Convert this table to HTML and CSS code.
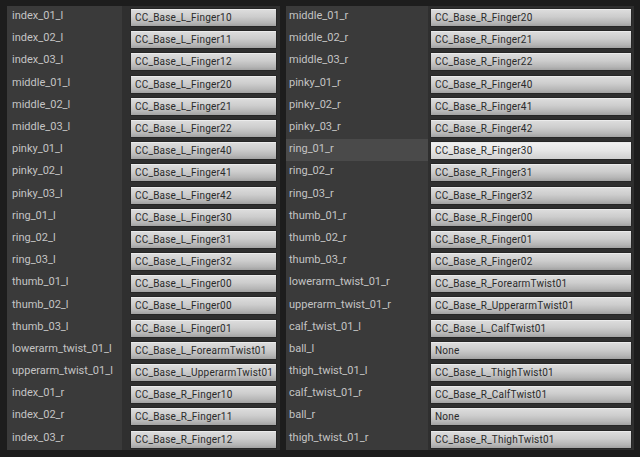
FILE: index.html
```html
<!DOCTYPE html>
<html>
<head>
<meta charset="utf-8">
<link rel="stylesheet" href="styles.css">
</head>
<body>
<div class="page">
  <div class="panel panel-left">
    <div class="lbl">index_01_l</div><div class="val"><div class="btn">CC_Base_L_Finger10</div></div>
    <div class="lbl">index_02_l</div><div class="val"><div class="btn">CC_Base_L_Finger11</div></div>
    <div class="lbl">index_03_l</div><div class="val"><div class="btn">CC_Base_L_Finger12</div></div>
    <div class="lbl">middle_01_l</div><div class="val"><div class="btn">CC_Base_L_Finger20</div></div>
    <div class="lbl">middle_02_l</div><div class="val"><div class="btn">CC_Base_L_Finger21</div></div>
    <div class="lbl">middle_03_l</div><div class="val"><div class="btn">CC_Base_L_Finger22</div></div>
    <div class="lbl">pinky_01_l</div><div class="val"><div class="btn">CC_Base_L_Finger40</div></div>
    <div class="lbl">pinky_02_l</div><div class="val"><div class="btn">CC_Base_L_Finger41</div></div>
    <div class="lbl">pinky_03_l</div><div class="val"><div class="btn">CC_Base_L_Finger42</div></div>
    <div class="lbl">ring_01_l</div><div class="val"><div class="btn">CC_Base_L_Finger30</div></div>
    <div class="lbl">ring_02_l</div><div class="val"><div class="btn">CC_Base_L_Finger31</div></div>
    <div class="lbl">ring_03_l</div><div class="val"><div class="btn">CC_Base_L_Finger32</div></div>
    <div class="lbl">thumb_01_l</div><div class="val"><div class="btn">CC_Base_L_Finger00</div></div>
    <div class="lbl">thumb_02_l</div><div class="val"><div class="btn">CC_Base_L_Finger00</div></div>
    <div class="lbl">thumb_03_l</div><div class="val"><div class="btn">CC_Base_L_Finger01</div></div>
    <div class="lbl">lowerarm_twist_01_l</div><div class="val"><div class="btn">CC_Base_L_ForearmTwist01</div></div>
    <div class="lbl">upperarm_twist_01_l</div><div class="val"><div class="btn">CC_Base_L_UpperarmTwist01</div></div>
    <div class="lbl">index_01_r</div><div class="val"><div class="btn">CC_Base_R_Finger10</div></div>
    <div class="lbl">index_02_r</div><div class="val"><div class="btn">CC_Base_R_Finger11</div></div>
    <div class="lbl">index_03_r</div><div class="val"><div class="btn">CC_Base_R_Finger12</div></div>
  </div>
  <div class="panel panel-right">
    <div class="lbl">middle_01_r</div><div class="val"><div class="btn">CC_Base_R_Finger20</div></div>
    <div class="lbl">middle_02_r</div><div class="val"><div class="btn">CC_Base_R_Finger21</div></div>
    <div class="lbl">middle_03_r</div><div class="val"><div class="btn">CC_Base_R_Finger22</div></div>
    <div class="lbl">pinky_01_r</div><div class="val"><div class="btn">CC_Base_R_Finger40</div></div>
    <div class="lbl">pinky_02_r</div><div class="val"><div class="btn">CC_Base_R_Finger41</div></div>
    <div class="lbl">pinky_03_r</div><div class="val"><div class="btn">CC_Base_R_Finger42</div></div>
    <div class="lbl hot">ring_01_r</div><div class="val"><div class="btn hot-btn">CC_Base_R_Finger30</div></div>
    <div class="lbl">ring_02_r</div><div class="val"><div class="btn">CC_Base_R_Finger31</div></div>
    <div class="lbl">ring_03_r</div><div class="val"><div class="btn">CC_Base_R_Finger32</div></div>
    <div class="lbl">thumb_01_r</div><div class="val"><div class="btn">CC_Base_R_Finger00</div></div>
    <div class="lbl">thumb_02_r</div><div class="val"><div class="btn">CC_Base_R_Finger01</div></div>
    <div class="lbl">thumb_03_r</div><div class="val"><div class="btn">CC_Base_R_Finger02</div></div>
    <div class="lbl">lowerarm_twist_01_r</div><div class="val"><div class="btn">CC_Base_R_ForearmTwist01</div></div>
    <div class="lbl">upperarm_twist_01_r</div><div class="val"><div class="btn">CC_Base_R_UpperarmTwist01</div></div>
    <div class="lbl">calf_twist_01_l</div><div class="val"><div class="btn">CC_Base_L_CalfTwist01</div></div>
    <div class="lbl">ball_l</div><div class="val"><div class="btn">None</div></div>
    <div class="lbl">thigh_twist_01_l</div><div class="val"><div class="btn">CC_Base_L_ThighTwist01</div></div>
    <div class="lbl">calf_twist_01_r</div><div class="val"><div class="btn">CC_Base_R_CalfTwist01</div></div>
    <div class="lbl">ball_r</div><div class="val"><div class="btn">None</div></div>
    <div class="lbl">thigh_twist_01_r</div><div class="val"><div class="btn">CC_Base_R_ThighTwist01</div></div>
  </div>
</div>
</body>
</html>
```

FILE: styles.css
```css
html, body {
  margin: 0;
  padding: 0;
  background: #1d1d1d;
  width: 640px;
  height: 457px;
  overflow: hidden;
}
.page {
  display: flex;
  padding: 6px 0 0 7px;
  gap: 6px;
  font-family: Roboto, "Liberation Sans", sans-serif;
}
.panel {
  display: grid;
  grid-auto-rows: 22.2px;
}
.panel-left {
  grid-template-columns: 115px 158px;
}
.panel-right {
  grid-template-columns: 142px 206px;
}
.lbl {
  background: #3a3a3a;
  color: #c4c4c4;
  font-size: 11px;
  padding-left: 5px;
  display: flex;
  align-items: center;
  padding-bottom: 3px;
  box-sizing: border-box;
  white-space: nowrap;
  overflow: hidden;
}
.panel-right .lbl {
  padding-left: 3px;
}
.lbl.hot {
  background: #4a4a4a;
}
.val {
  background: #2f2f2f;
  padding: 2px 3px 0 8px;
  box-sizing: border-box;
}
.panel-right .val {
  padding-left: 2px;
  padding-right: 2px;
}
.btn {
  height: 19px;
  box-sizing: border-box;
  border: 1px solid #262626;
  border-radius: 1px;
  background: linear-gradient(to bottom, #dedede 0%, #cdcdcd 45%, #b6b6b6 80%, #a2a2a2 100%);
  box-shadow: inset 0 1px 0 #ebebeb;
  color: #2a2a2a;
  font-size: 10px;
  letter-spacing: 0.2px;
  line-height: 17px;
  padding-left: 4px;
  white-space: nowrap;
  overflow: hidden;
}
.btn.hot-btn {
  background: linear-gradient(to bottom, #f2f2f2 0%, #e6e6e6 50%, #d0d0d0 100%);
}
```
